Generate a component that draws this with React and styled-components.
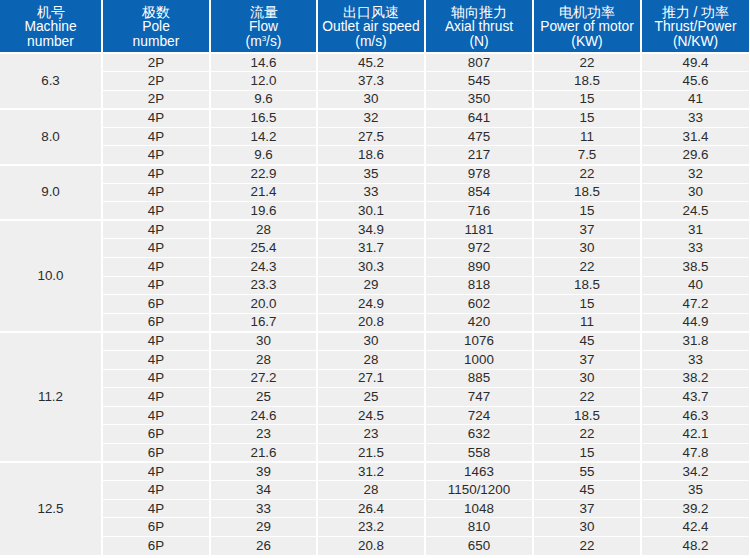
import React from "react";
import styled, { createGlobalStyle } from "styled-components";

const Global = createGlobalStyle`
  html, body { margin: 0; padding: 0; background: #ffffff; }
  body { font-family: "Liberation Sans", Arial, sans-serif; }
`;

const Table = styled.table`
  width: 750px;
  table-layout: fixed;
  border-collapse: collapse;
  background: #efefef;
  color: #2b2b2b;
`;

const HeadRow = styled.tr`
  height: 53px;
`;

const Row = styled.tr`
  height: 18.6px;
`;

const HeadCell = styled.th`
  background: #0b63b3;
  color: #ffffff;
  font-weight: 400;
  font-size: 13.8px;
  line-height: 14.5px;
  padding: 3px 0 0;
  text-align: center;
  vertical-align: middle;
  border-left: 2px solid #ffffff;
  border-bottom: 1px solid #ffffff;
  &:first-child { border-left: none; }
  &:last-child { border-right: 2px solid #ffffff; }
  sup { font-size: 8px; line-height: 0; vertical-align: 5px; }
`;

const Cell = styled.td`
  font-size: 13.4px;
  padding: 0;
  line-height: 14px;
  text-align: center;
  vertical-align: middle;
  border-style: solid;
  border-color: #ffffff;
  border-width: ${(p) => (p.$group ? "2px" : "1px")} 2px 0 2px;
  &:first-child { border-left: none; }
`;

const Machine = styled(Cell)`
  border-top-width: 2px;
`;

const groups = [
  ["6.3", [
    ["2P", "14.6", "45.2", "807", "22", "49.4"],
    ["2P", "12.0", "37.3", "545", "18.5", "45.6"],
    ["2P", "9.6", "30", "350", "15", "41"],
  ]],
  ["8.0", [
    ["4P", "16.5", "32", "641", "15", "33"],
    ["4P", "14.2", "27.5", "475", "11", "31.4"],
    ["4P", "9.6", "18.6", "217", "7.5", "29.6"],
  ]],
  ["9.0", [
    ["4P", "22.9", "35", "978", "22", "32"],
    ["4P", "21.4", "33", "854", "18.5", "30"],
    ["4P", "19.6", "30.1", "716", "15", "24.5"],
  ]],
  ["10.0", [
    ["4P", "28", "34.9", "1181", "37", "31"],
    ["4P", "25.4", "31.7", "972", "30", "33"],
    ["4P", "24.3", "30.3", "890", "22", "38.5"],
    ["4P", "23.3", "29", "818", "18.5", "40"],
    ["6P", "20.0", "24.9", "602", "15", "47.2"],
    ["6P", "16.7", "20.8", "420", "11", "44.9"],
  ]],
  ["11.2", [
    ["4P", "30", "30", "1076", "45", "31.8"],
    ["4P", "28", "28", "1000", "37", "33"],
    ["4P", "27.2", "27.1", "885", "30", "38.2"],
    ["4P", "25", "25", "747", "22", "43.7"],
    ["4P", "24.6", "24.5", "724", "18.5", "46.3"],
    ["6P", "23", "23", "632", "22", "42.1"],
    ["6P", "21.6", "21.5", "558", "15", "47.8"],
  ]],
  ["12.5", [
    ["4P", "39", "31.2", "1463", "55", "34.2"],
    ["4P", "34", "28", "1150/1200", "45", "35"],
    ["4P", "33", "26.4", "1048", "37", "39.2"],
    ["6P", "29", "23.2", "810", "30", "42.4"],
    ["6P", "26", "20.8", "650", "22", "48.2"],
  ]],
];

const widths = [102, 108, 107, 108, 108, 108, 109];

const App = () => {
  return (
    <>
      <Global />
      <Table>
        <colgroup>
          {widths.map((w, i) => (
            <col key={i} style={{ width: w }} />
          ))}
        </colgroup>
        <thead>
          <HeadRow>
            <HeadCell>机号<br />Machine<br />number</HeadCell>
            <HeadCell>极数<br />Pole<br />number</HeadCell>
            <HeadCell>流量<br />Flow<br />(m<sup>3</sup>/s)</HeadCell>
            <HeadCell>出口风速<br />Outlet air speed<br />(m/s)</HeadCell>
            <HeadCell>轴向推力<br />Axial thrust<br />(N)</HeadCell>
            <HeadCell>电机功率<br />Power of motor<br />(KW)</HeadCell>
            <HeadCell>推力 / 功率<br />Thrust/Power<br />(N/KW)</HeadCell>
          </HeadRow>
        </thead>
        <tbody>
          {groups.map(([no, rows]) =>
            rows.map((r, i) => (
              <Row key={no + i}>
                {i === 0 && <Machine rowSpan={rows.length}>{no}</Machine>}
                {r.map((v, j) => (
                  <Cell key={j} $group={i === 0}>{v}</Cell>
                ))}
              </Row>
            ))
          )}
        </tbody>
      </Table>
    </>
  );
};

export default App;
